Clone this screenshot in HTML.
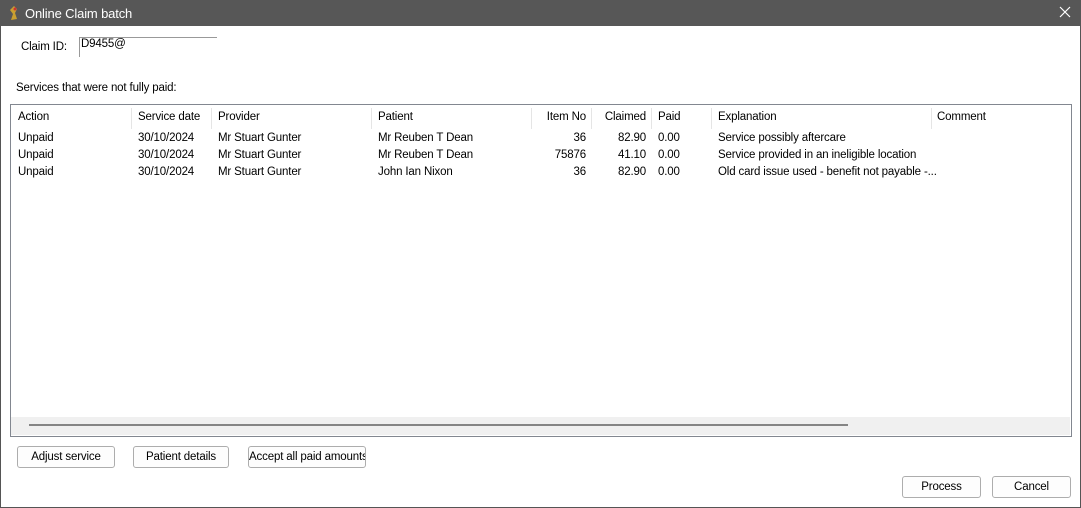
<html><head><style>
body{margin:0;width:1081px;height:508px;position:relative;font-family:"Liberation Sans",sans-serif;font-size:11.5px;letter-spacing:-0.15px;color:#000;background:#fff;overflow:hidden}
.a{position:absolute;white-space:nowrap}
.btn{position:absolute;height:20px;border:1px solid #adadad;border-radius:3px;background:#fdfdfd;text-align:center;line-height:20px;font-size:11.5px;white-space:nowrap;overflow:hidden}
.dv{position:absolute;top:108px;width:1px;height:21px;background:#e5e5e5}
.r{text-align:right}
</style></head><body>
<div class="a" style="left:0;top:0;width:1081px;height:26px;background:#575757"></div>
<div class="a" style="left:8px;top:5px;width:10px;height:16px"><svg width="12" height="16"><path d="M6 1 L9 4 L7 8 L9 14 L3 15 L5 9 L2 5Z" fill="#c9a030"/><circle cx="7" cy="4" r="1.5" fill="#c33"/></svg></div>
<div class="a" style="left:25px;top:6px;color:#fff;font-size:13px">Online Claim batch</div>
<div class="a" style="left:1059px;top:6px"><svg width="12" height="12"><path d="M1 1L11 11M11 1L1 11" stroke="#fff" stroke-width="1.2"/></svg></div>
<div class="a" style="left:0;top:26px;width:1px;height:482px;background:#555"></div>
<div class="a" style="right:0;top:26px;width:1px;height:482px;background:#555"></div>
<div class="a" style="left:0;bottom:0;width:1081px;height:1px;background:#555"></div>
<div class="a" style="left:21px;top:41px">Claim ID:</div>
<div class="a" style="left:79px;top:37px;width:137px;height:19px;border-top:1px solid #999;border-left:1px solid #999"></div>
<div class="a" style="left:81px;top:38px">D9455@</div>
<div class="a" style="left:16px;top:82px">Services that were not fully paid:</div>
<div class="a" style="left:10px;top:104px;width:1060px;height:331px;border:1px solid #828790"></div>
<div class="dv" style="left:131px"></div><div class="dv" style="left:211px"></div><div class="dv" style="left:371px"></div><div class="dv" style="left:531px"></div><div class="dv" style="left:591px"></div><div class="dv" style="left:651px"></div><div class="dv" style="left:711px"></div><div class="dv" style="left:931px"></div>
<div class="a" style="left:18px;top:111px">Action</div><div class="a" style="left:138px;top:111px">Service date</div><div class="a" style="left:218px;top:111px">Provider</div><div class="a" style="left:378px;top:111px">Patient</div><div class="a r" style="left:532px;width:54px;top:111px">Item No</div><div class="a r" style="left:592px;width:54px;top:111px">Claimed</div><div class="a" style="left:658px;top:111px">Paid</div><div class="a" style="left:718px;top:111px">Explanation</div><div class="a" style="left:937px;top:111px">Comment</div>

<div class="a" style="left:18px;top:132px">Unpaid</div><div class="a" style="left:138px;top:132px">30/10/2024</div><div class="a" style="left:218px;top:132px">Mr Stuart Gunter</div><div class="a" style="left:378px;top:132px">Mr Reuben T Dean</div><div class="a r" style="left:532px;width:54px;top:132px">36</div><div class="a r" style="left:592px;width:54px;top:132px">82.90</div><div class="a" style="left:658px;top:132px">0.00</div><div class="a" style="left:718px;top:132px">Service possibly aftercare</div>
<div class="a" style="left:18px;top:149px">Unpaid</div><div class="a" style="left:138px;top:149px">30/10/2024</div><div class="a" style="left:218px;top:149px">Mr Stuart Gunter</div><div class="a" style="left:378px;top:149px">Mr Reuben T Dean</div><div class="a r" style="left:532px;width:54px;top:149px">75876</div><div class="a r" style="left:592px;width:54px;top:149px">41.10</div><div class="a" style="left:658px;top:149px">0.00</div><div class="a" style="left:718px;top:149px">Service provided in an ineligible location</div>
<div class="a" style="left:18px;top:166px">Unpaid</div><div class="a" style="left:138px;top:166px">30/10/2024</div><div class="a" style="left:218px;top:166px">Mr Stuart Gunter</div><div class="a" style="left:378px;top:166px">John Ian Nixon</div><div class="a r" style="left:532px;width:54px;top:166px">36</div><div class="a r" style="left:592px;width:54px;top:166px">82.90</div><div class="a" style="left:658px;top:166px">0.00</div><div class="a" style="left:718px;top:166px">Old card issue used - benefit not payable -...</div>

<div class="a" style="left:11px;top:417px;width:1059px;height:18px;background:#f0f0f0"></div>
<div class="a" style="left:29px;top:424px;width:819px;height:2px;background:#858585"></div>
<div class="btn" style="left:17px;top:446px;width:96px">Adjust service</div>
<div class="btn" style="left:133px;top:446px;width:94px">Patient details</div>
<div class="btn" style="left:248px;top:446px;width:116px">Accept all paid amounts</div>
<div class="btn" style="left:902px;top:476px;width:77px">Process</div>
<div class="btn" style="left:992px;top:476px;width:77px">Cancel</div>
</body></html>
